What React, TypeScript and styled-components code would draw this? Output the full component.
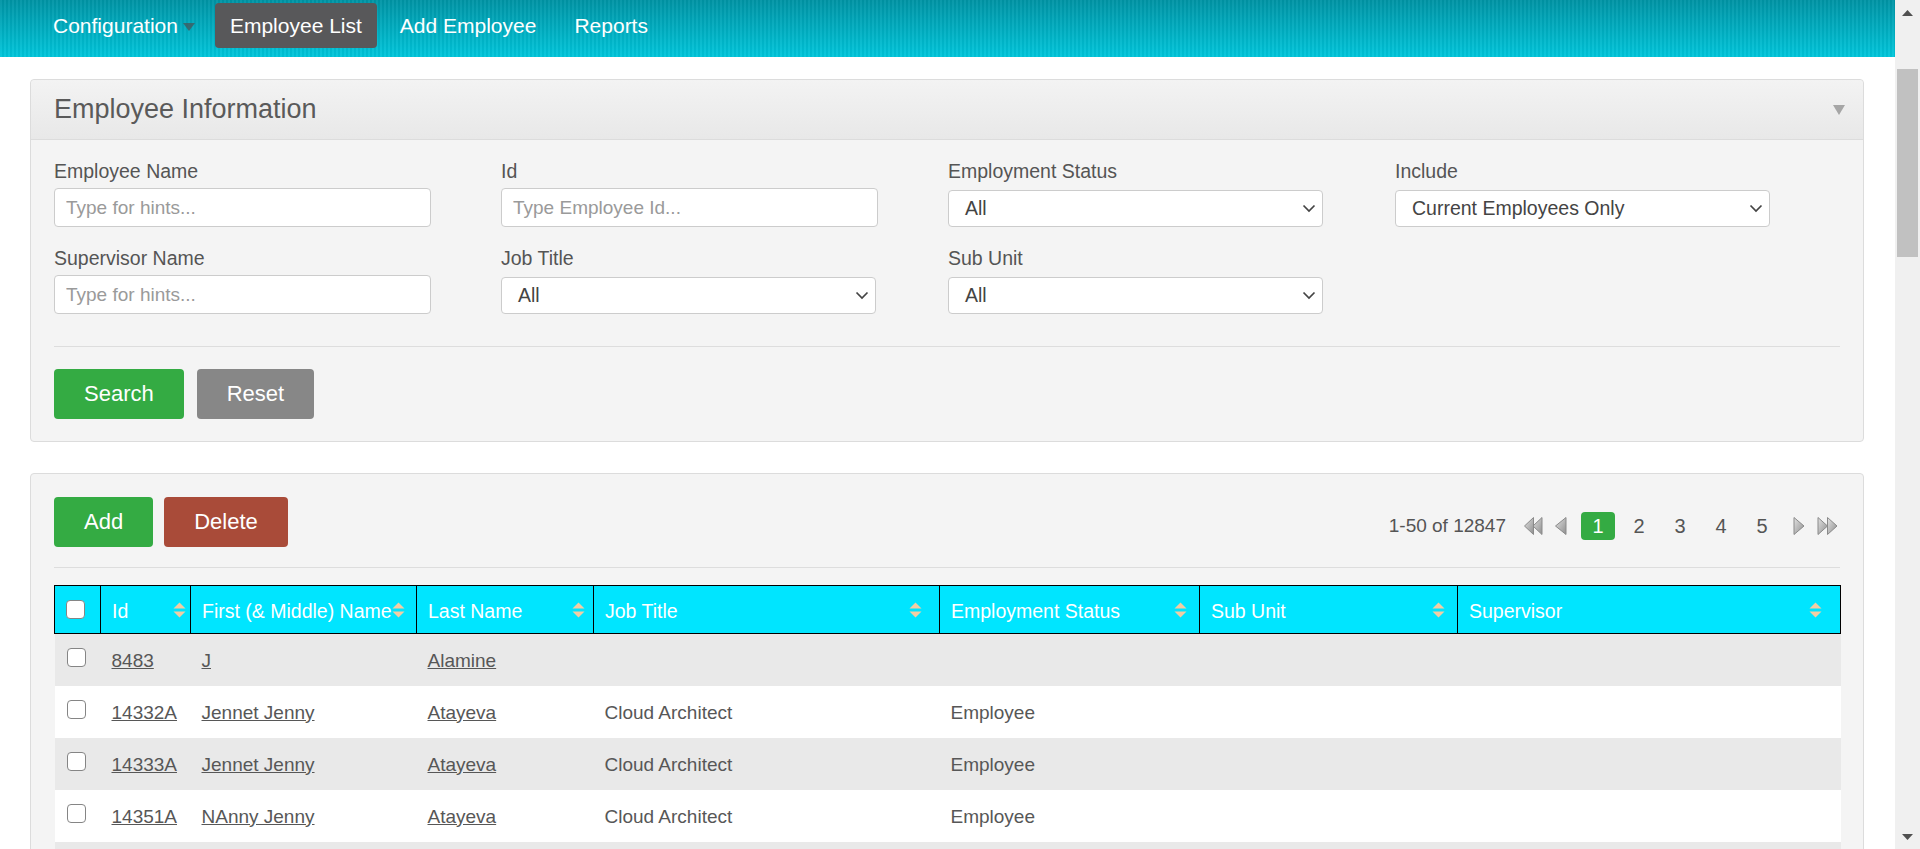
import React from "react";
import styled, { createGlobalStyle } from "styled-components";

const GlobalStyle = createGlobalStyle`
  html, body { margin: 0; padding: 0; height: 100%; overflow: hidden; background: #fff; }
  body { font-family: "Liberation Sans", Arial, sans-serif; color: #555; }
  * { box-sizing: border-box; }
`;

const GREEN = "#34ab43";

const Shell = styled.div`
  display: flex;
  height: 100vh;
  width: 100vw;
  overflow: hidden;
`;

const Main = styled.main`
  flex: 1;
  min-width: 0;
  overflow: hidden;
`;

const NavBar = styled.nav`
  height: 57px;
  display: flex;
  align-items: flex-start;
  gap: 8px;
  padding: 3px 0 0 38px;
  background:
    repeating-linear-gradient(90deg, rgba(255,255,255,0.045) 0 2px, rgba(0,0,0,0.035) 2px 4px),
    linear-gradient(#0094a5, #00c6db);
`;

const NavItem = styled.a<{ $active?: boolean; $caret?: boolean }>`
  display: flex;
  align-items: center;
  height: 45px;
  padding: 0 ${(p) => (p.$caret ? 12 : 15)}px 0 15px;
  font-size: 21px;
  color: #fff;
  text-decoration: none;
  border-radius: 4px;
  background: ${(p) => (p.$active ? "#58585a" : "transparent")};
`;

const Caret = styled.span`
  width: 0;
  height: 0;
  border-left: 6px solid transparent;
  border-right: 6px solid transparent;
  border-top: 8px solid rgba(70, 85, 90, 0.75);
  margin-left: 5px;
  margin-top: 3px;
`;

const Content = styled.div`
  padding: 22px 31px 0 30px;
  display: flex;
  flex-direction: column;
  gap: 31px;
`;

const Panel = styled.section`
  border: 1px solid #dcdcdc;
  border-radius: 4px;
  background: #f4f4f4;
`;

const PanelHeader = styled.header`
  height: 60px;
  display: flex;
  align-items: center;
  justify-content: space-between;
  padding: 0 18px 0 23px;
  border-bottom: 1px solid #dcdcdc;
  border-radius: 4px 4px 0 0;
  background: linear-gradient(#f3f3f3, #e8e8e8);
`;

const PanelTitle = styled.h1`
  margin: 0;
  font-size: 27px;
  font-weight: normal;
  color: #5a5a5a;
  line-height: 1;
`;

const PanelBody = styled.div<{ $top: number; $bottom: number }>`
  padding: ${(p) => p.$top}px 23px ${(p) => p.$bottom}px;
`;

const FieldGrid = styled.div`
  display: grid;
  grid-template-columns: repeat(4, 377px);
  column-gap: 70px;
  row-gap: 20px;
`;

const Field = styled.div`
  display: flex;
  flex-direction: column;
`;

const Label = styled.label`
  font-size: 19.5px;
  line-height: 22px;
  color: #555;
  margin-bottom: 6px;
`;

const TextInput = styled.input`
  height: 39px;
  width: 100%;
  border: 1px solid #cccccc;
  border-radius: 4px;
  background: #fff;
  padding: 0 11px;
  font-family: inherit;
  font-size: 19px;
  color: #555;
  outline: none;
  &::placeholder {
    color: #9a9a9a;
  }
`;

const SelectBox = styled.div`
  margin-top: 2px;
  height: 37px;
  width: 375px;
  display: flex;
  align-items: center;
  justify-content: space-between;
  padding: 0 6px 0 16px;
  border: 1px solid #cccccc;
  border-radius: 4px;
  background: #fff;
  font-size: 19.5px;
  color: #444;
`;

const Divider = styled.hr<{ $top: number; $bottom: number }>`
  border: 0;
  border-top: 1px solid #dddddd;
  margin: ${(p) => p.$top}px 0 ${(p) => p.$bottom}px;
`;

const ButtonRow = styled.div<{ $gap: number }>`
  display: flex;
  gap: ${(p) => p.$gap}px;
`;

const COLORS = { green: GREEN, gray: "#878787", red: "#a94b39" };

const Button = styled.button<{ $variant: "green" | "gray" | "red" }>`
  height: 50px;
  padding: 0 30px;
  border: 0;
  border-radius: 4px;
  font-family: inherit;
  font-size: 22px;
  color: #fff;
  background: ${(p) => COLORS[p.$variant]};
  cursor: pointer;
`;

const Toolbar = styled.div`
  display: flex;
  justify-content: space-between;
  align-items: flex-start;
`;

const Pager = styled.div`
  display: flex;
  align-items: center;
  margin-top: 15px;
  height: 28px;
  font-size: 19px;
  color: #555;
`;

const PagerCount = styled.span`
  margin-right: 17px;
`;

const PagerIcon = styled.svg<{ $ml: number; $mr?: number }>`
  margin-left: ${(p) => p.$ml}px;
  margin-right: ${(p) => p.$mr ?? 0}px;
  flex: none;
`;

const PageList = styled.div`
  display: flex;
  gap: 7px;
  margin-left: 14px;
`;

const PageNum = styled.span<{ $active?: boolean }>`
  width: 34px;
  height: 28px;
  display: flex;
  align-items: center;
  justify-content: center;
  border-radius: 4px;
  font-size: 20px;
  background: ${(p) => (p.$active ? GREEN : "transparent")};
  color: ${(p) => (p.$active ? "#fff" : "#555")};
`;

const Table = styled.table`
  width: 100%;
  border-collapse: collapse;
  table-layout: fixed;
  margin-top: 17px;
`;

const Col = styled.col<{ $w: number }>`
  width: ${(p) => p.$w}px;
`;

const Th = styled.th`
  position: relative;
  height: 48px;
  background: #00e5ff;
  border: 1px solid #000;
  color: #fff;
  font-weight: normal;
  text-align: left;
  padding: 4px 11px 0 11px;
  font-size: 19.5px;
  white-space: nowrap;
`;

const CheckTh = styled(Th)`
  padding: 0 0 0 11px;
`;

const SortIcon = styled.svg`
  position: absolute;
  top: 50%;
  left: calc((100% - 13px) * 0.95);
  transform: translateY(-50%);
`;

const Tr = styled.tr<{ $shade: boolean }>`
  background: ${(p) => (p.$shade ? "#e9e9e9" : "#fff")};
`;

const Td = styled.td`
  height: 52px;
  padding: 2px 11px 0 11px;
  font-size: 19px;
  color: #575757;
  vertical-align: middle;
  white-space: nowrap;
`;

const CheckTd = styled(Td)`
  padding: 0 0 4px 12px;
`;

const CellLink = styled.a`
  color: #575757;
  text-decoration: underline;
`;

const Check = styled.input.attrs({ type: "checkbox" })`
  appearance: none;
  -webkit-appearance: none;
  width: 19px;
  height: 19px;
  margin: 0;
  display: block;
  border: 1px solid #858585;
  border-radius: 4px;
  background: #fff;
`;

const Scrollbar = styled.div`
  width: 25px;
  flex: none;
  background: #f0f0f0;
  display: flex;
  flex-direction: column;
`;

const ScrollArrow = styled.div`
  height: 25px;
  display: flex;
  align-items: center;
  justify-content: center;
`;

const ScrollTrack = styled.div`
  flex: 1;
  padding: 44px 2px 0 2px;
`;

const ScrollThumb = styled.div`
  height: 188px;
  background: #c1c1c1;
`;

const Chevron = () => (
  <svg width="14" height="9" viewBox="0 0 14 9">
    <polyline points="1.5,1.5 7,7 12.5,1.5" fill="none" stroke="#444" strokeWidth="1.7" />
  </svg>
);

const Sort = () => (
  <SortIcon width="13" height="16" viewBox="0 0 13 16">
    <polygon points="0.5,6.5 6.5,0.5 12.5,6.5" fill="#f3cda4" />
    <polygon points="0.5,9.5 6.5,15.5 12.5,9.5" fill="#f3cda4" />
  </SortIcon>
);

const PagerDefs = () => (
  <svg width="0" height="0" style={{ position: "absolute" }}>
    <defs>
      <linearGradient id="pgGrad" x1="0" y1="0" x2="1" y2="1">
        <stop offset="0" stopColor="#e2e2e2" />
        <stop offset="1" stopColor="#8e8e8e" />
      </linearGradient>
    </defs>
  </svg>
);

const tri = { fill: "url(#pgGrad)", stroke: "#8a8a8a", strokeWidth: 1 };

type FieldDef = { label: string; kind: "input" | "select"; value: string };

const fields: FieldDef[] = [
  { label: "Employee Name", kind: "input", value: "Type for hints..." },
  { label: "Id", kind: "input", value: "Type Employee Id..." },
  { label: "Employment Status", kind: "select", value: "All" },
  { label: "Include", kind: "select", value: "Current Employees Only" },
  { label: "Supervisor Name", kind: "input", value: "Type for hints..." },
  { label: "Job Title", kind: "select", value: "All" },
  { label: "Sub Unit", kind: "select", value: "All" },
];

const columns = [
  { title: "Id", w: 90 },
  { title: "First (& Middle) Name", w: 226 },
  { title: "Last Name", w: 177 },
  { title: "Job Title", w: 346 },
  { title: "Employment Status", w: 260 },
  { title: "Sub Unit", w: 258 },
  { title: "Supervisor", w: 383 },
];

const rows = [
  ["8483", "J", "Alamine", "", "", "", ""],
  ["14332A", "Jennet Jenny", "Atayeva", "Cloud Architect", "Employee", "", ""],
  ["14333A", "Jennet Jenny", "Atayeva", "Cloud Architect", "Employee", "", ""],
  ["14351A", "NAnny Jenny", "Atayeva", "Cloud Architect", "Employee", "", ""],
];

export default function App() {
  return (
    <>
      <GlobalStyle />
      <PagerDefs />
      <Shell>
        <Main>
          <NavBar>
            <NavItem href="#" $caret>
              Configuration
              <Caret />
            </NavItem>
            <NavItem href="#" $active>
              Employee List
            </NavItem>
            <NavItem href="#">Add Employee</NavItem>
            <NavItem href="#">Reports</NavItem>
          </NavBar>

          <Content>
            <Panel>
              <PanelHeader>
                <PanelTitle>Employee Information</PanelTitle>
                <svg width="12" height="10" viewBox="0 0 12 10">
                  <polygon points="0,0 12,0 6,10" fill="#a6a6a6" />
                </svg>
              </PanelHeader>
              <PanelBody $top={20} $bottom={22}>
                <FieldGrid>
                  {fields.map((f, i) => (
                    <Field key={i}>
                      <Label>{f.label}</Label>
                      {f.kind === "input" ? (
                        <TextInput placeholder={f.value} />
                      ) : (
                        <SelectBox>
                          <span>{f.value}</span>
                          <Chevron />
                        </SelectBox>
                      )}
                    </Field>
                  ))}
                </FieldGrid>
                <Divider $top={32} $bottom={22} />
                <ButtonRow $gap={13}>
                  <Button $variant="green">Search</Button>
                  <Button $variant="gray">Reset</Button>
                </ButtonRow>
              </PanelBody>
            </Panel>

            <Panel>
              <PanelBody $top={23} $bottom={0}>
                <Toolbar>
                  <ButtonRow $gap={11}>
                    <Button $variant="green">Add</Button>
                    <Button $variant="red">Delete</Button>
                  </ButtonRow>
                  <Pager>
                    <PagerCount>1-50 of 12847</PagerCount>
                    <PagerIcon $ml={0} width="20" height="20" viewBox="0 0 20 20">
                      <polygon points="19,1.5 10,10 19,18.5" {...tri} />
                      <polygon points="10.5,1.5 1.5,10 10.5,18.5" {...tri} />
                    </PagerIcon>
                    <PagerIcon $ml={11} width="13" height="20" viewBox="0 0 13 20">
                      <polygon points="12,1.5 1.5,10 12,18.5" {...tri} />
                    </PagerIcon>
                    <PageList>
                      <PageNum $active>1</PageNum>
                      <PageNum>2</PageNum>
                      <PageNum>3</PageNum>
                      <PageNum>4</PageNum>
                      <PageNum>5</PageNum>
                    </PageList>
                    <PagerIcon $ml={14} width="12" height="20" viewBox="0 0 12 20">
                      <polygon points="1,1.5 11,10 1,18.5" {...tri} />
                    </PagerIcon>
                    <PagerIcon $ml={12} $mr={2} width="21" height="20" viewBox="0 0 21 20">
                      <polygon points="1,1.5 10.5,10 1,18.5" {...tri} />
                      <polygon points="10.5,1.5 20,10 10.5,18.5" {...tri} />
                    </PagerIcon>
                  </Pager>
                </Toolbar>
                <Divider $top={20} $bottom={0} />
                <Table>
                  <colgroup>
                    <Col $w={46} />
                    {columns.map((c) => (
                      <Col key={c.title} $w={c.w} />
                    ))}
                  </colgroup>
                  <thead>
                    <tr>
                      <CheckTh>
                        <Check />
                      </CheckTh>
                      {columns.map((c) => (
                        <Th key={c.title}>
                          {c.title}
                          <Sort />
                        </Th>
                      ))}
                    </tr>
                  </thead>
                  <tbody>
                    {rows.map((r, i) => (
                      <Tr key={i} $shade={i % 2 === 0}>
                        <CheckTd>
                          <Check />
                        </CheckTd>
                        {r.map((v, j) => (
                          <Td key={j}>{j < 3 && v ? <CellLink href="#">{v}</CellLink> : v}</Td>
                        ))}
                      </Tr>
                    ))}
                    <Tr $shade>
                      <Td colSpan={8} />
                    </Tr>
                  </tbody>
                </Table>
              </PanelBody>
            </Panel>
          </Content>
        </Main>

        <Scrollbar>
          <ScrollArrow>
            <svg width="11" height="6" viewBox="0 0 11 6">
              <polygon points="0,6 5.5,0 11,6" fill="#505050" />
            </svg>
          </ScrollArrow>
          <ScrollTrack>
            <ScrollThumb />
          </ScrollTrack>
          <ScrollArrow>
            <svg width="11" height="6" viewBox="0 0 11 6">
              <polygon points="0,0 11,0 5.5,6" fill="#505050" />
            </svg>
          </ScrollArrow>
        </Scrollbar>
      </Shell>
    </>
  );
}
